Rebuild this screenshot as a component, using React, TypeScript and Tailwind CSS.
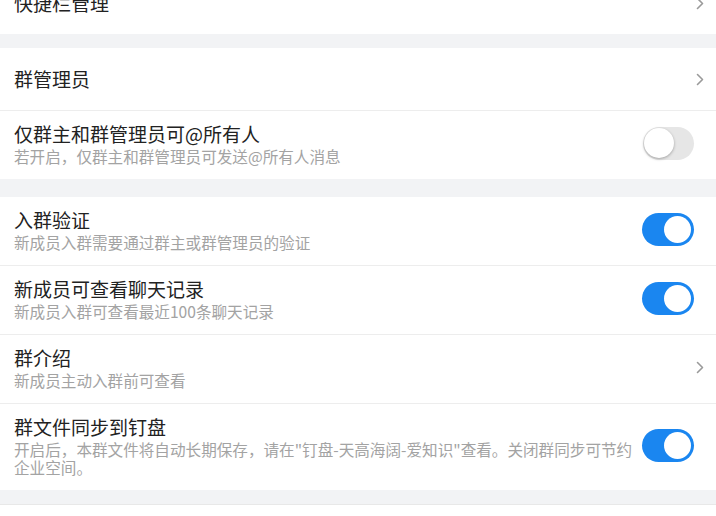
import React from 'react';

type Row = {
  title: string;
  desc?: string;
  kind: 'link' | 'on' | 'off';
};

const groups: Row[][] = [
  [{ title: '快捷栏管理', kind: 'link' }],
  [
    { title: '群管理员', kind: 'link' },
    { title: '仅群主和群管理员可@所有人', desc: '若开启，仅群主和群管理员可发送@所有人消息', kind: 'off' },
  ],
  [
    { title: '入群验证', desc: '新成员入群需要通过群主或群管理员的验证', kind: 'on' },
    { title: '新成员可查看聊天记录', desc: '新成员入群可查看最近100条聊天记录', kind: 'on' },
    { title: '群介绍', desc: '新成员主动入群前可查看', kind: 'link' },
    {
      title: '群文件同步到钉盘',
      desc: '开启后，本群文件将自动长期保存，请在"钉盘-天高海阔-爱知识"查看。关闭群同步可节约企业空间。',
      kind: 'on',
    },
  ],
];

function Chevron() {
  return (
    <svg width="8" height="13" viewBox="0 0 8 13" className="shrink-0">
      <polyline points="1.5,1.5 6.5,6.5 1.5,11.5" fill="none" stroke="#9a9a9a" strokeWidth="1.6" strokeLinecap="round" strokeLinejoin="round" />
    </svg>
  );
}

function Toggle({ on }: { on: boolean }) {
  if (on) {
    return (
      <div className="mr-[10px] flex h-[33px] w-[52px] shrink-0 items-center justify-end rounded-full bg-[#1a86f0] p-[3px]">
        <div className="h-[27px] w-[27px] rounded-full bg-white" />
      </div>
    );
  }
  return (
    <div className="mr-[10px] flex h-[33px] w-[51px] shrink-0 items-center rounded-full bg-[#e6e6e6] p-[1px]">
      <div className="h-[30px] w-[30px] rounded-full bg-white shadow-[0_1px_3px_rgba(0,0,0,0.3)]" />
    </div>
  );
}

export default function App() {
  return (
    <div className="h-[516px] w-[716px] overflow-hidden bg-[#f2f3f5] font-['Noto_Sans_CJK_SC',sans-serif]">
      <div className="-mt-[28px] flex flex-col">
        {groups.map((group, gi) => (
          <div key={gi} className={gi === 0 ? 'bg-white' : gi === 1 ? 'mt-[14px] bg-white' : 'mt-[18px] bg-white'}>
            {group.map((row, ri) => (
              <div
                key={row.title}
                className={`flex items-center gap-2 pl-[14px] pr-3 ${ri > 0 ? 'border-t border-[#ededed]' : ''} ${row.desc ? 'pt-[10px] pb-[14px]' : 'py-[18px]'}`}
              >
                <div className="min-w-0 flex-1">
                  <p className="text-[19px] leading-[26px] text-[#222]">{row.title}</p>
                  {row.desc && <p className="text-[15.6px] leading-[18px] text-[#a3a3a3]">{row.desc}</p>}
                </div>
                {row.kind === 'link' ? <Chevron /> : <Toggle on={row.kind === 'on'} />}
              </div>
            ))}
          </div>
        ))}
        <div className="mt-[14px] h-[20px] border-t border-[#e8e8e8] bg-white" />
      </div>
    </div>
  );
}
